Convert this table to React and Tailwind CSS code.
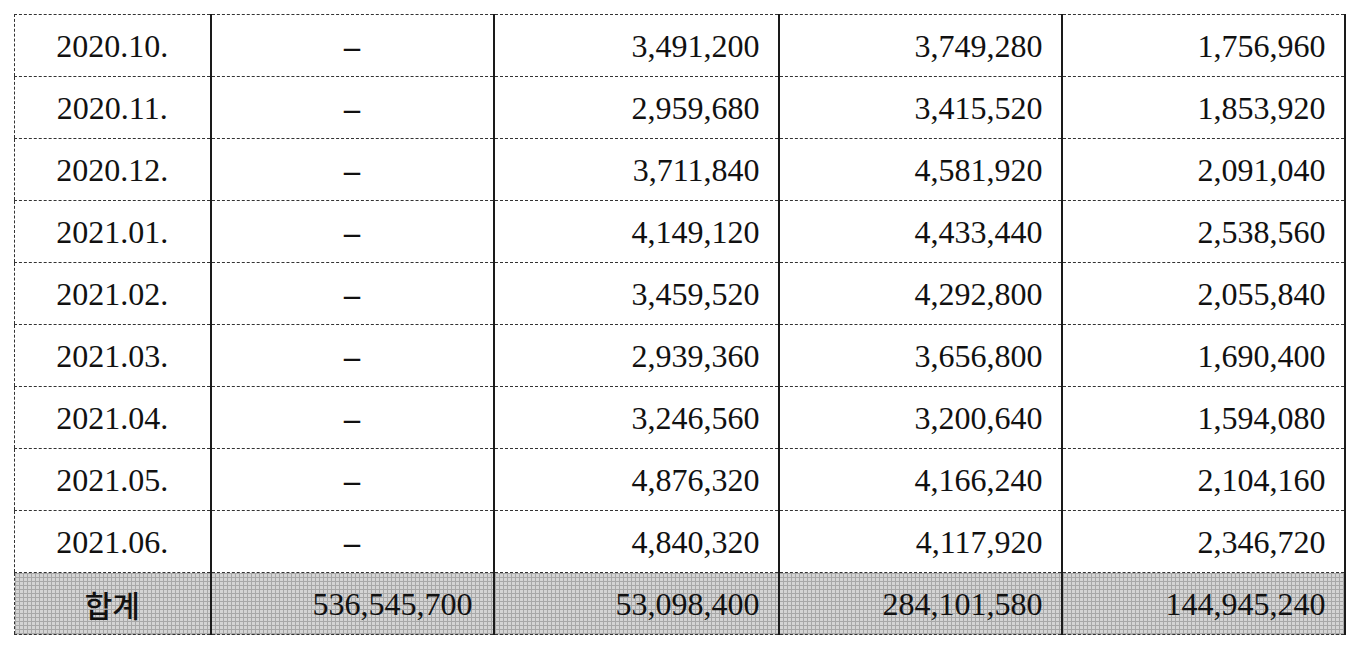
const rows = [
  ["2020.10.", "3,491,200", "3,749,280", "1,756,960"],
  ["2020.11.", "2,959,680", "3,415,520", "1,853,920"],
  ["2020.12.", "3,711,840", "4,581,920", "2,091,040"],
  ["2021.01.", "4,149,120", "4,433,440", "2,538,560"],
  ["2021.02.", "3,459,520", "4,292,800", "2,055,840"],
  ["2021.03.", "2,939,360", "3,656,800", "1,690,400"],
  ["2021.04.", "3,246,560", "3,200,640", "1,594,080"],
  ["2021.05.", "4,876,320", "4,166,240", "2,104,160"],
  ["2021.06.", "4,840,320", "4,117,920", "2,346,720"],
];

// vertical rules solid, horizontal rules fine dashed
const cell = "h-[62px] p-0 border-solid border-b border-b-[#333] [border-bottom-style:dashed] border-r-[2px] border-r-[#1a1a1a]";

export default function App() {
  return (
    <div className="w-[1359px] h-[649px] bg-white pt-[14px] pl-[14px] font-['Liberation_Serif','Noto_Sans_CJK_KR',serif] text-[32px] text-[#111] leading-none">
      <table className="w-[1330px] table-fixed border-collapse border-t border-l border-dashed border-[#333]">
        <colgroup>
          <col className="w-[196px]" />
          <col className="w-[283px]" />
          <col className="w-[285px]" />
          <col className="w-[283px]" />
          <col className="w-[283px]" />
        </colgroup>
        <tbody>
          {rows.map((r) => (
            <tr key={r[0]}>
              <td className={`${cell} text-center`}>{r[0]}</td>
              <td className={`${cell} text-center font-bold`}>–</td>
              <td className={`${cell} text-right pr-[18px]`}>{r[1]}</td>
              <td className={`${cell} text-right pr-[18px]`}>{r[2]}</td>
              <td className={`${cell} text-right pr-[18px] border-r-[1px]`}>{r[3]}</td>
            </tr>
          ))}
          <tr className="bg-[#d4d4d4] bg-[linear-gradient(90deg,#a8a8a8_1px,transparent_1px),linear-gradient(#a8a8a8_1px,transparent_1px)] bg-[length:4px_4px]">
            <td className={`${cell} text-center font-['Noto_Sans_CJK_KR',sans-serif] text-[30px] font-medium`}>합계</td>
            <td className={`${cell} text-right pr-[20px]`}>536,545,700</td>
            <td className={`${cell} text-right pr-[18px]`}>53,098,400</td>
            <td className={`${cell} text-right pr-[18px]`}>284,101,580</td>
            <td className={`${cell} text-right pr-[18px] border-r-[1px]`}>144,945,240</td>
          </tr>
        </tbody>
      </table>
    </div>
  );
}
